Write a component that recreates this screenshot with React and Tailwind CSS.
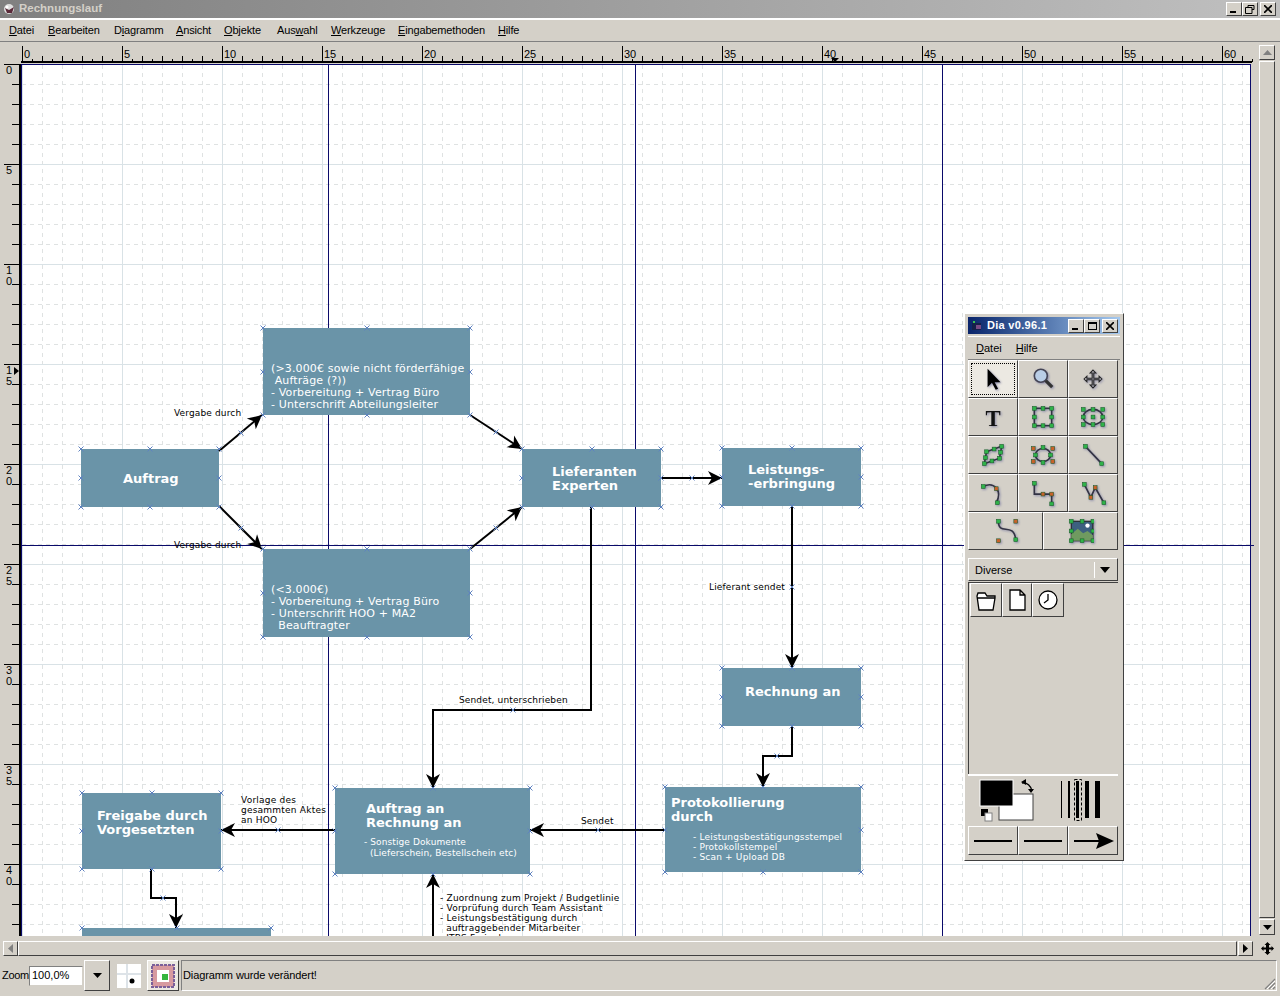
import React from 'react';

const uiFont = "font-['Liberation_Sans',sans-serif]";
const raised = 'border border-t-white border-l-white border-r-[#404040] border-b-[#404040]';

const nodes = [
  { x: 81, y: 449, w: 138, h: 58 },
  { x: 263, y: 328, w: 207, h: 87 },
  { x: 263, y: 549, w: 207, h: 88 },
  { x: 522, y: 449, w: 139, h: 58 },
  { x: 722, y: 448, w: 139, h: 58 },
  { x: 722, y: 668, w: 139, h: 58 },
  { x: 665, y: 787, w: 196, h: 85 },
  { x: 335, y: 788, w: 195, h: 86 },
  { x: 82, y: 793, w: 139, h: 76 },
  { x: 82, y: 928, w: 189, h: 60 },
];

const texts = [
  { x: 123, y: 472, kind: 'big', lines: ['Auftrag'] },
  { x: 271, y: 363, kind: 'mid', lines: ['(>3.000€ sowie nicht förderfähige', ' Aufträge (?))', '- Vorbereitung + Vertrag Büro', '- Unterschrift Abteilungsleiter'] },
  { x: 271, y: 584, kind: 'mid', lines: ['(<3.000€)', '- Vorbereitung + Vertrag Büro', '- Unterschrift HOO + MA2', '  Beauftragter'] },
  { x: 552, y: 465, kind: 'big', lines: ['Lieferanten', 'Experten'] },
  { x: 748, y: 463, kind: 'big', lines: ['Leistungs-', '-erbringung'] },
  { x: 745, y: 685, kind: 'big', lines: ['Rechnung an'] },
  { x: 671, y: 796, kind: 'big', lines: ['Protokollierung', 'durch'] },
  { x: 693, y: 832, kind: 'small', lines: ['- Leistungsbestätigungsstempel', '- Protokollstempel', '- Scan + Upload DB'] },
  { x: 366, y: 802, kind: 'big', lines: ['Auftrag an', 'Rechnung an'] },
  { x: 364, y: 837, kind: 'smallwide', lines: ['- Sonstige Dokumente', '  (Lieferschein, Bestellschein etc)'] },
  { x: 97, y: 809, kind: 'big', lines: ['Freigabe durch', 'Vorgesetzten'] },
  { x: 174, y: 408, kind: 'label', lines: ['Vergabe durch'] },
  { x: 174, y: 540, kind: 'label', lines: ['Vergabe durch'] },
  { x: 709, y: 582, kind: 'label', lines: ['Lieferant sendet'] },
  { x: 459, y: 695, kind: 'label', lines: ['Sendet, unterschrieben'] },
  { x: 581, y: 816, kind: 'label', lines: ['Sendet'] },
  { x: 241, y: 795, kind: 'labelwide', lines: ['Vorlage des', 'gesammten Aktes', 'an HOO'] },
  { x: 440, y: 893, kind: 'labelwide', lines: ['- Zuordnung zum Projekt / Budgetlinie', '- Vorprüfung durch Team Assistant', '- Leistungsbestätigung durch', '  auftraggebender Mitarbeiter', '  ITBS Freigabe'] },
];

const textStyles = {
  big: 'text-white font-bold text-[13px] leading-[14px]',
  mid: 'text-white text-[11px] leading-[12px] tracking-[0.14px]',
  small: 'text-white text-[9px] leading-[10px] tracking-[0.18px]',
  smallwide: 'text-white text-[9px] leading-[11px] tracking-[0.1px]',
  label: 'text-black text-[9px] leading-[10px] tracking-[0.14px]',
  labelwide: 'text-black text-[9px] leading-[10px] tracking-[0.22px]',
};

const lines = [
  { pts: [[219, 451], [262, 415]] },
  { pts: [[219, 506], [262, 549]] },
  { pts: [[470, 415], [522, 449]] },
  { pts: [[470, 549], [522, 507]] },
  { pts: [[661, 478], [722, 478]] },
  { pts: [[792, 506], [792, 668]] },
  { pts: [[591, 507], [591, 710], [433, 710], [433, 788]] },
  { pts: [[792, 726], [792, 756], [763, 756], [763, 787]] },
  { pts: [[665, 830], [530, 830]] },
  { pts: [[335, 830], [221, 830]] },
  { pts: [[433, 940], [433, 874]] },
  { pts: [[151, 869], [151, 898], [176, 898], [176, 928]] },
];

const extraMarks = [[241, 433], [241, 528], [496, 432], [496, 528], [692, 478], [792, 587], [513, 710], [777, 756], [598, 830], [278, 830], [163, 898]];

const arrowHead = (a, b) => {
  const len = Math.hypot(b[0] - a[0], b[1] - a[1]);
  const ux = (b[0] - a[0]) / len;
  const uy = (b[1] - a[1]) / len;
  const p = (back, side) => `${b[0] - ux * back - uy * side},${b[1] - uy * back + ux * side}`;
  return [p(0, 0), p(14, 7), p(10, 0), p(14, -7)].join(' ');
};

const Mark = ({ x, y }) => (
  <path d={`M${x - 2.5} ${y - 2.5}l5 5M${x + 2.5} ${y - 2.5}l-5 5`} stroke="#5f82c0" strokeWidth="1" fill="none" />
);

const nodeMarks = (n) => {
  const xs = [n.x, n.x + n.w / 2, n.x + n.w];
  const ys = [n.y, n.y + n.h / 2, n.y + n.h];
  const out = [];
  ys.forEach((y, j) => xs.forEach((x, i) => { if (!(i === 1 && j === 1)) out.push([Math.round(x), Math.round(y)]); }));
  return out;
};

const Canvas = () => {
  const gridX = Array.from({ length: 62 }, (_, i) => 0.5 + i * 20);
  const gridY = Array.from({ length: 44 }, (_, i) => i * 20 - 0.5);
  return (
    <div className={`relative w-[1230px] h-[872px] bg-white overflow-hidden border-l border-t border-r border-[#0a0a6a] ${uiFont}`}>
      <div className="absolute left-[-22px] top-[-65px] w-[1280px] h-[996px]">
        {/* grid + guides */}
        <svg className="absolute left-[22px] top-[65px]" width="1228" height="871">
          {gridX.map((x, i) => (
            <line key={x} x1={x} x2={x} y1="0" y2="871" stroke={i % 5 === 0 ? '#d9e2e6' : '#dfe2e2'} strokeWidth="1" strokeDasharray={i % 5 === 0 ? undefined : '4 4'} />
          ))}
          {gridY.map((y, i) => (
            <line key={y} y1={y} y2={y} x1="0" x2="1228" stroke={i % 5 === 0 ? '#d9e2e6' : '#dfe2e2'} strokeWidth="1" strokeDasharray={i % 5 === 0 ? undefined : '4 4'} />
          ))}
          <g stroke="#0a0a6a" strokeWidth="1">
            <line x1="306.5" x2="306.5" y1="0" y2="871" />
            <line x1="613.5" x2="613.5" y1="0" y2="871" />
            <line x1="920.5" x2="920.5" y1="0" y2="871" />
          </g>
        </svg>
        {nodes.map((n) => (
          <div key={`${n.x}-${n.y}`} className="absolute bg-[#6a94a8]" style={{ left: n.x, top: n.y, width: n.w, height: n.h }} />
        ))}
        <svg className="absolute left-0 top-0" width="1280" height="996">
          <line x1="22" x2="1280" y1="545.5" y2="545.5" stroke="#0a0a6a" strokeWidth="1" />
          {lines.map((l) => {
            const n = l.pts.length;
            return (
              <g key={l.pts.join()}>
                <polyline points={l.pts.map((p) => p.join(',')).join(' ')} fill="none" stroke="#000" strokeWidth="2" />
                <polygon points={arrowHead(l.pts[n - 2], l.pts[n - 1])} fill="#000" />
              </g>
            );
          })}
          {nodes.flatMap(nodeMarks).map(([x, y]) => <Mark key={`${x}-${y}`} x={x} y={y} />)}
          {extraMarks.map(([x, y]) => <Mark key={`e${x}-${y}`} x={x} y={y} />)}
        </svg>
        {texts.map((t) => (
          <div key={`${t.x}-${t.y}`} className={`absolute whitespace-pre font-['DejaVu_Sans',sans-serif] ${textStyles[t.kind]}`} style={{ left: t.x, top: t.y }}>
            {t.lines.join('\n')}
          </div>
        ))}
      </div>
    </div>
  );
};

const TopRuler = () => {
  const ticks = Array.from({ length: 124 }, (_, i) => i * 10);
  return (
    <svg width="1232" height="19" className="block">
      {ticks.map((x) => (
        <line key={x} x1={x + 1.5} x2={x + 1.5} y1={x % 100 === 0 ? 1 : x % 20 === 0 ? 11 : 14} y2="17" stroke="#000" strokeWidth="1" />
      ))}
      <rect x="0" y="16" width="1231" height="2" fill="#000" />
      {Array.from({ length: 13 }, (_, i) => (
        <text key={i} x={i * 100 + 3} y="13" fontSize="11" fontFamily="Liberation Sans" fill="#000">{i * 5}</text>
      ))}
      <path d="M810 13h8l-4 4z" fill="#000" />
    </svg>
  );
};

const LeftRuler = () => {
  const ticks = Array.from({ length: 44 }, (_, i) => i * 20);
  return (
    <svg width="18" height="872" className="block">
      {ticks.map((y) => (
        <line key={y} x1={y % 100 === 0 ? 1 : 9} x2="17" y1={y + 0.5} y2={y + 0.5} stroke="#000" strokeWidth="1" />
      ))}
      <rect x="16" y="0" width="2" height="872" fill="#000" />
      {Array.from({ length: 9 }, (_, i) => {
        const s = String(i * 5);
        return s.split('').map((c, k) => (
          <text key={`${i}-${k}`} x="3" y={i * 100 + 10 + k * 11} fontSize="11" fontFamily="Liberation Sans" fill="#000">{c}</text>
        ));
      })}
      <path d="M11 303l5 4-5 4z" fill="#000" />
    </svg>
  );
};

const WinBtn = ({ children, className = '' }) => (
  <div className={`w-[16px] h-[14px] bg-[#d4d0c8] ${raised} flex items-center justify-center ${className}`}>{children}</div>
);

const Dot = ({ x, y, c = '#2fb34a' }) => <rect x={x - 1.75} y={y - 1.75} width="3.5" height="3.5" fill={c} stroke="#1a5a28" strokeWidth="0.5" />;

const icons = {
  pointer: <path d="M7 2.500v17l4-4 3.500 6.500 2.200-1-3.200-6h5.500z" fill="#000" />,
  zoom: (
    <g>
      <circle cx="10" cy="9" r="6" fill="#b9cde6" stroke="#445" strokeWidth="1.500" />
      <path d="M14.500 13.500l6 6" stroke="#333" strokeWidth="3" />
    </g>
  ),
  move: <path transform="translate(3 3) scale(0.75)" d="M12 1l3.500 3.500h-2.500v6.500h6.500V8.500L23 12l-3.500 3.500V13H13v6.500h2.500L12 23l-3.500-3.500H11V13H4.500v2.500L1 12l3.500-3.500V11H11V4.500H8.500z" fill="none" stroke="#222" strokeWidth="1.300" />,
  text: <text x="12" y="20" textAnchor="middle" fontFamily="Liberation Serif" fontWeight="700" fontSize="21" fill="#111">T</text>,
  box: (
    <g>
      <rect x="4" y="4" width="16" height="16" fill="none" stroke="#334" strokeWidth="1.500" />
      {[[4, 4], [12, 4], [20, 4], [4, 12], [20, 12], [4, 20], [12, 20], [20, 20]].map(([x, y]) => <Dot key={`${x}${y}`} x={x} y={y} />)}
    </g>
  ),
  ellipse: (
    <g>
      <ellipse cx="12" cy="12" rx="9" ry="7" fill="none" stroke="#334" strokeWidth="1.500" />
      {[[3, 5], [12, 5], [21, 5], [3, 12], [12, 12], [21, 12], [3, 19], [12, 19], [21, 19]].map(([x, y]) => <Dot key={`${x}${y}`} x={x} y={y} />)}
    </g>
  ),
  polygon: (
    <g>
      <path d="M6 9l14-5-2 11-14 5z" fill="none" stroke="#334" strokeWidth="1.500" />
      {[[6, 9], [13, 6.500], [20, 4], [19, 9.500], [18, 15], [11, 17.500], [4, 20], [5, 14.500]].map(([x, y]) => <Dot key={`${x}${y}`} x={x} y={y} />)}
    </g>
  ),
  bezier: (
    <g>
      <ellipse cx="12" cy="12" rx="7" ry="6" fill="none" stroke="#334" strokeWidth="1.500" />
      {[[3, 6], [21, 6], [3, 18], [21, 18]].map(([x, y]) => <Dot key={`${x}${y}`} x={x} y={y} c="#c8622a" />)}
      {[[12, 5], [5, 12], [19, 12], [12, 19]].map(([x, y]) => <Dot key={`${x}${y}`} x={x} y={y} />)}
    </g>
  ),
  line: (
    <g>
      <path d="M5 4l15 16" stroke="#334" strokeWidth="1.500" />
      <Dot x={5} y={4} /><Dot x={20} y={20} />
    </g>
  ),
  arc: (
    <g>
      <path d="M3 6c10-5 18 4 12 15" fill="none" stroke="#334" strokeWidth="1.500" />
      <Dot x={3} y={6} /><Dot x={16} y={21} /><Dot x={15} y={8} c="#c8622a" />
    </g>
  ),
  zigzag: (
    <g>
      <path d="M4 3v10h16v9" fill="none" stroke="#334" strokeWidth="1.500" />
      <Dot x={4} y={3} /><Dot x={12} y={13} c="#c8622a" /><Dot x={20} y={22} /><Dot x={20} y={13} c="#c8622a" />
    </g>
  ),
  polyline: (
    <g>
      <path d="M4 4l6 12 4-9 8 14" fill="none" stroke="#334" strokeWidth="1.500" />
      <Dot x={4} y={4} /><Dot x={10} y={16} c="#c8622a" /><Dot x={14} y={7} c="#c8622a" /><Dot x={22} y={21} />
    </g>
  ),
  curve: (
    <g>
      <path d="M5 3c0 14 14 0 16 17" fill="none" stroke="#334" strokeWidth="1.500" />
      <Dot x={5} y={3} /><Dot x={21} y={20} /><Dot x={21} y={3} c="#c8622a" /><Dot x={5} y={21} c="#c8622a" />
    </g>
  ),
  image: (
    <g>
      <rect x="3" y="3" width="20" height="18" fill="#3d6080" stroke="#222" />
      <path d="M3 21V15l6-5 5 4 4-2 5 4v5z" fill="#6f9a60" />
      <circle cx="18" cy="7" r="2" fill="#fff" />
      {[[3, 3], [13, 3], [23, 3], [3, 12], [23, 12], [3, 21], [13, 21], [23, 21]].map(([x, y]) => <Dot key={`${x}${y}`} x={x} y={y} />)}
    </g>
  ),
};

const ToolBtn = ({ icon, className = '', selected = false }) => (
  <div className={`h-[38px] flex items-center justify-center ${raised} ${selected ? 'bg-[#ece9e2] outline-1 outline-dotted outline-black -outline-offset-4' : 'bg-[#d4d0c8]'} ${className}`}>
    <svg width="26" height="26" viewBox="0 0 24 24">{icons[icon]}</svg>
  </div>
);

const Toolbox = () => (
  <div className={`absolute left-[964px] top-[313px] w-[160px] h-[548px] bg-[#d4d0c8] ${raised} p-[3px] text-[11px] text-black ${uiFont}`}>
    <div className="h-[17px] bg-gradient-to-r from-[#0a246a] to-[#a6caf0] flex items-center pl-[2px] pr-[2px]">
      <svg width="14" height="14" viewBox="0 0 14 14" className="mr-[3px]">
        <rect x="2" y="4" width="9" height="7" fill="#15204a" />
        <path d="M3 2h2v2H3z" fill="#3bc24f" />
        <path d="M6 6h5v4H6z" fill="#7a4a86" />
      </svg>
      <span className="text-white font-bold text-[11px] tracking-[0.3px] flex-1">Dia v0.96.1</span>
      <WinBtn><span className="block w-[6px] h-[2px] bg-black mt-[6px] mr-[2px]" /></WinBtn>
      <WinBtn><span className="block w-[9px] h-[8px] border border-t-2 border-black" /></WinBtn>
      <WinBtn className="ml-[2px]">
        <svg width="8" height="8" viewBox="0 0 8 8"><path d="M0 0l8 8M8 0L0 8" stroke="#000" strokeWidth="1.600" /></svg>
      </WinBtn>
    </div>
    <div className="h-[24px] mt-[2px] flex items-center gap-[14px] pl-[8px] border-t border-white border-b border-b-[#808080]">
      <span><u>D</u>atei</span>
      <span><u>H</u>ilfe</span>
    </div>
    <div className="grid grid-cols-3 w-[150px] [&_svg]:drop-shadow-[1px_1px_1px_#8a8aa8]">
      <ToolBtn icon="pointer" selected />
      <ToolBtn icon="zoom" />
      <ToolBtn icon="move" />
      <ToolBtn icon="text" />
      <ToolBtn icon="box" />
      <ToolBtn icon="ellipse" />
      <ToolBtn icon="polygon" />
      <ToolBtn icon="bezier" />
      <ToolBtn icon="line" />
      <ToolBtn icon="arc" />
      <ToolBtn icon="zigzag" />
      <ToolBtn icon="polyline" />
    </div>
    <div className="grid grid-cols-2 w-[150px] [&_svg]:drop-shadow-[1px_1px_1px_#8a8aa8]">
      <ToolBtn icon="curve" />
      <ToolBtn icon="image" />
    </div>
    <div className={`mt-[8px] h-[23px] w-[150px] ${raised} flex items-center pl-[6px] pt-px`}>
      <span className="flex-1">Diverse</span>
      <span className="w-px h-[16px] bg-white" />
      <svg width="22" height="16" viewBox="0 0 22 16"><path d="M5 5h10l-5 6z" fill="#000" /></svg>
    </div>
    <div className="mt-[1px] h-[192px] w-[150px] border-l border-t border-[#404040] flex items-start pl-px">
      <div className={`w-[32px] h-[34px] ${raised} flex items-center justify-center`}>
        <svg width="24" height="24" viewBox="0 0 24 24"><path d="M3 8l1-3h7l2 3h8v2L19 22H5zM3 10h18" fill="#fff" stroke="#000" strokeWidth="1.300" /></svg>
      </div>
      <div className={`w-[30px] h-[34px] ${raised} flex items-center justify-center`}>
        <svg width="24" height="24" viewBox="0 0 24 24"><path d="M5 2h10l5 5v15H5zM15 2v5h5" fill="#fff" stroke="#000" strokeWidth="1.300" /></svg>
      </div>
      <div className={`w-[32px] h-[34px] ${raised} flex items-center justify-center`}>
        <svg width="24" height="24" viewBox="0 0 24 24"><circle cx="12" cy="12" r="9" fill="#fff" stroke="#000" strokeWidth="1.300" /><path d="M12 6v6l-4 3" fill="none" stroke="#000" strokeWidth="1.300" /></svg>
      </div>
    </div>
    <div className="w-[150px] h-[52px] border-t-2 border-white flex items-center">
      <svg width="150" height="50" viewBox="0 0 150 50">
        <rect x="31" y="18" width="34" height="26" fill="#fff" stroke="#404040" />
        <rect x="12" y="4" width="33" height="26" fill="#000" stroke="#fff" />
        <rect x="13" y="33" width="7" height="7" fill="#000" />
        <rect x="17" y="37" width="7" height="8" fill="#fff" stroke="#808080" />
        <path d="M54 7c5-1 9 3 10 8" fill="none" stroke="#000" strokeWidth="1.400" />
        <path d="M53 6l5-3v6zM60 13h6l-3 4z" fill="#000" />
        <rect x="93" y="5" width="1" height="37" fill="#000" />
        <rect x="100" y="5" width="2" height="37" fill="#000" />
        <rect x="108" y="5" width="3" height="37" fill="#000" />
        <rect x="117" y="5" width="4" height="37" fill="#000" />
        <rect x="127" y="5" width="5" height="37" fill="#000" />
        <rect x="106.500" y="3.500" width="7" height="41" fill="none" stroke="#000" strokeDasharray="3 2" />
      </svg>
    </div>
    <div className="grid grid-cols-3 w-[150px]">
      {['a', 'b', 'c'].map((k) => (
        <div key={k} className={`h-[29px] ${raised} flex items-center justify-center`}>
          <svg width="46" height="20" viewBox="0 0 46 20">
            <rect x="4" y="9" width={k === 'c' ? 32 : 38} height="2" fill="#000" />
            {k === 'c' && <path d="M44 10L26 2l3 8-3 8z" fill="#000" />}
          </svg>
        </div>
      ))}
    </div>
  </div>
);

const App = () => (
  <div className={`relative w-[1280px] h-[996px] overflow-hidden bg-[#d4d0c8] text-[11px] text-black ${uiFont}`}>
    {/* title bar */}
    <div className="h-[18px] bg-gradient-to-r from-[#808080] to-[#c0c0c0] flex items-center pl-[3px] pr-[4px]">
      <svg width="13" height="13" viewBox="0 0 13 13" className="mr-[3px]">
        <circle cx="6" cy="6" r="5" fill="#ddd" />
        <path d="M2 5l4 2 5-3-2 6H4z" fill="#5a2a3a" />
        <circle cx="4" cy="4" r="1.500" fill="#fff" />
      </svg>
      <span className="font-bold text-[#d4d0c8] text-[11.5px] flex-1">Rechnungslauf</span>
      <WinBtn><span className="block w-[6px] h-[2px] bg-black mt-[6px] mr-[2px]" /></WinBtn>
      <WinBtn>
        <svg width="10" height="9" viewBox="0 0 10 9"><path d="M3 2V0.500h6v4H7M0.500 2.500h6.500v6h-6.500z" fill="none" stroke="#000" /></svg>
      </WinBtn>
      <WinBtn className="ml-[2px]">
        <svg width="8" height="8" viewBox="0 0 8 8"><path d="M0 0l8 8M8 0L0 8" stroke="#000" strokeWidth="1.600" /></svg>
      </WinBtn>
    </div>
    {/* menu bar */}
    <div className="h-[24px] border-t-2 border-white border-b border-b-[#808080] flex items-center pl-[9px] tracking-[-0.15px]">
      <span className="w-[39px]"><u>D</u>atei</span>
      <span className="w-[66px]"><u>B</u>earbeiten</span>
      <span className="w-[62px]">D<u>i</u>agramm</span>
      <span className="w-[48px]"><u>A</u>nsicht</span>
      <span className="w-[53px]"><u>O</u>bjekte</span>
      <span className="w-[54px]">Aus<u>w</u>ahl</span>
      <span className="w-[67px]"><u>W</u>erkzeuge</span>
      <span className="w-[100px]"><u>E</u>ingabemethoden</span>
      <span><u>H</u>ilfe</span>
    </div>
    {/* rulers + canvas + scrollbar */}
    <div className="mt-[3px] ml-[3px] flex">
      <div className="flex flex-col w-[1250px]">
        <div className="flex h-[19px]">
          <div className="w-[18px]" />
          <TopRuler />
        </div>
        <div className="flex">
          <LeftRuler />
          <Canvas />
        </div>
      </div>
      <div className="ml-[6px] w-[16px] h-[890px] flex flex-col">
        <div className={`h-[15px] ${raised} flex items-center justify-center`}>
          <svg width="9" height="5" viewBox="0 0 9 5"><path d="M4.500 0L9 5H0z" fill="#808080" /></svg>
        </div>
        <div className={`h-[858px] mt-px ${raised}`} />
        <div className={`h-[16px] mt-px ${raised} flex items-center justify-center`}>
          <svg width="9" height="5" viewBox="0 0 9 5"><path d="M0 0h9L4.500 5z" fill="#000" /></svg>
        </div>
      </div>
    </div>
    {/* guide runs a little past the canvas edge */}
    <div className="absolute left-[1251px] top-[545px] w-[3px] h-px bg-[#0a0a6a]" />
    {/* horizontal scrollbar */}
    <div className="mt-[5px] ml-[3px] h-[15px] flex items-center">
      <div className={`w-[15px] h-[15px] ${raised} flex items-center justify-center`}>
        <svg width="5" height="9" viewBox="0 0 5 9"><path d="M5 0v9L0 4.500z" fill="#808080" /></svg>
      </div>
      <div className={`w-[1219px] h-[15px] ${raised}`} />
      <div className={`w-[15px] h-[15px] ml-[1px] ${raised} flex items-center justify-center`}>
        <svg width="5" height="9" viewBox="0 0 5 9"><path d="M0 0v9l5-4.500z" fill="#000" /></svg>
      </div>
      <svg width="13" height="13" viewBox="0 0 13 13" className="ml-[8px]">
        <path d="M6.500 0l3 3H8v2.500h2.500V4l2.500 2.500L10.500 9V7.500H8V10h1.500l-3 3-3-3H5V7.500H2.500V9L0 6.500 2.500 4v1.500H5V3H3.500z" fill="#000" />
      </svg>
    </div>
    {/* status bar */}
    <div className="mt-[3px] h-[33px] flex items-center pl-[2px]">
      <span className="w-[27px] tracking-[-0.3px]">Zoom</span>
      <div className="w-[54px] h-[20px] bg-white border border-t-[#808080] border-l-[#808080] border-r-[#d4d0c8] border-b-[#d4d0c8] flex items-center pl-[2px]">100,0%</div>
      <div className={`w-[26px] h-[31px] ml-px ${raised} flex items-center justify-center`}>
        <svg width="9" height="5" viewBox="0 0 9 5"><path d="M0 0h9L4.500 5z" fill="#000" /></svg>
      </div>
      <svg width="24" height="24" viewBox="0 0 24 24" className="ml-[7px]">
        <rect width="24" height="24" fill="#fff" />
        <rect x="9" width="2" height="24" fill="#dde3e8" />
        <rect y="9" width="24" height="2" fill="#dde3e8" />
        <circle cx="15" cy="17" r="2.500" fill="#000" />
      </svg>
      <div className={`ml-[6px] w-[32px] h-[31px] bg-[#ece9e2] ${raised} flex items-center justify-center`}>
        <svg width="24" height="24" viewBox="0 0 24 24">
          <rect x="1" y="1" width="22" height="22" fill="#d79aa0" stroke="#7a5f9a" strokeWidth="2" strokeDasharray="3 1" />
          <rect x="6" y="6" width="12" height="12" fill="#fff" />
          <rect x="11" y="10" width="6" height="6" fill="#35b53d" />
        </svg>
      </div>
      <div className="relative ml-[2px] flex-1 h-[31px] mr-[3px] border border-t-[#808080] border-l-[#808080] border-r-white border-b-white flex items-center pl-px tracking-[-0.1px]">
        Diagramm wurde verändert!
        <svg width="12" height="12" viewBox="0 0 12 12" className="absolute right-0 bottom-0">
          <path d="M11 1L1 11M11 5l-6 6M11 9l-2 2" stroke="#808080" strokeWidth="1.200" />
          <path d="M11 3l-8 8M11 7l-4 4" stroke="#fff" strokeWidth="1" />
        </svg>
      </div>
    </div>
    <Toolbox />
  </div>
);

export default App;
